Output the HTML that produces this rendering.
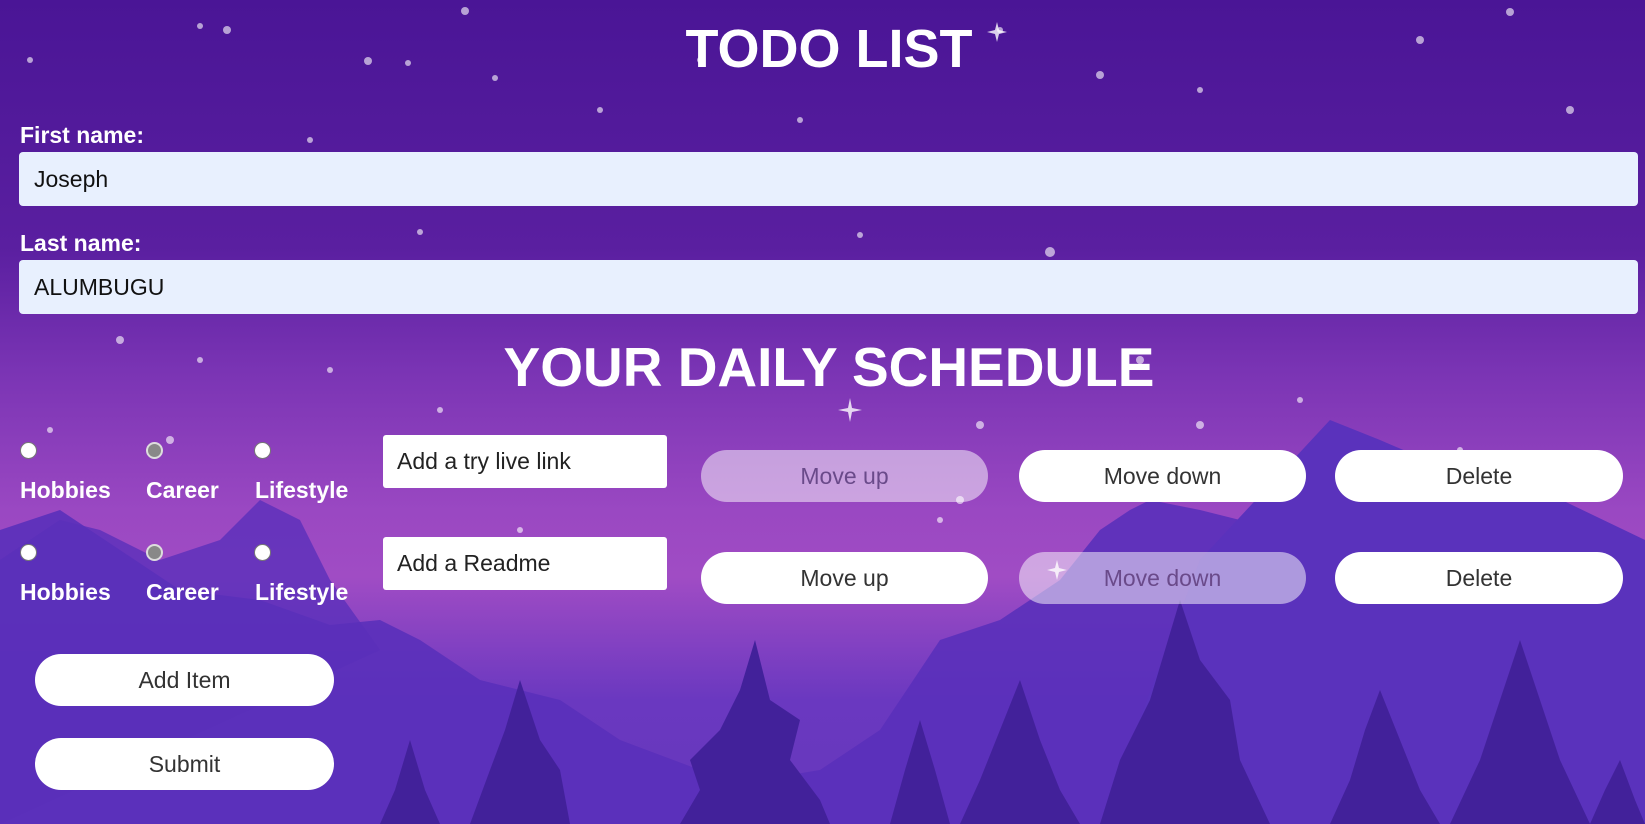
<!DOCTYPE html>
<html><head><meta charset="utf-8"><style>
*{margin:0;padding:0;box-sizing:border-box}
html,body{width:1645px;height:824px;overflow:hidden}
body{position:relative;font-family:"Liberation Sans",Arial,sans-serif;background:linear-gradient(180deg,#4a1596 0%,#5a1fa0 30%,#7a34b4 45%,#9a48c2 62%,#a04cc4 70%,#6a38c0 85%,#6638bc 100%)}
.a{position:absolute}
h1{position:absolute;left:0;width:1645px;padding-left:13px;text-align:center;color:#fff;font-weight:bold;line-height:1}
.lbl{position:absolute;color:#fff;font-weight:bold;font-size:23px}
.inp{position:absolute;left:19px;width:1619px;height:54px;background:#e8f0fe;border-radius:4px;font-size:23px;padding-left:15px;line-height:54px;color:#111}
.r{position:absolute;width:17px;height:17px;border-radius:50%;background:#fff;border:1px solid #777}
.r.g{background:#888;border:2px solid #ddd}
.t{position:absolute;width:284px;height:53px;background:#fff;border-radius:3px;font-size:23px;line-height:53px;padding-left:14px;color:#222}
.b{position:absolute;height:52px;border-radius:26px;background:#fff;color:#333;font-size:23px;text-align:center;line-height:52px}
.b.d{background:rgba(255,255,255,.5);color:#6a4a8a}
</style></head><body>
<svg class="a" style="left:0;top:0" width="1645" height="824">
<path d="M0 530 L60 510 120 550 180 590 260 600 330 625 380 620 420 640 480 680 560 700 620 740 700 770 760 780 820 770 880 730 940 640 1000 620 1060 580 1100 530 1130 510 1150 500 1200 510 1260 525 1330 550 1410 500 1460 520 1500 550 1560 520 1645 540 L1645 824 L0 824Z" fill="#5a30ba" opacity=".9"/>
<path d="M0 560 L60 520 100 530 160 560 220 540 260 500 300 520 330 580 380 650 0 824Z" fill="#5a30ba" opacity=".8"/>
<path d="M1330 420 L1380 440 1450 470 1520 480 1645 540 L1645 824 1100 824 1200 560Z" fill="#5a32bc"/>
<g fill="#42219a">
<path d="M755 640 L770 700 800 720 790 760 820 800 830 824 680 824 700 790 690 760 720 730 740 690Z"/>
<path d="M520 680 L540 740 560 770 570 824 470 824 490 770 505 730Z"/>
<path d="M1180 600 L1200 660 1230 700 1240 760 1270 824 1100 824 1120 760 1150 700 1165 650Z"/>
<path d="M1020 680 L1040 740 1060 790 1080 824 960 824 980 780 1000 730Z"/>
<path d="M1520 640 L1540 700 1560 760 1590 824 1450 824 1480 760 1500 700Z"/>
<path d="M1380 690 L1400 740 1420 790 1440 824 1330 824 1350 780 1365 730Z"/>
<path d="M920 720 L935 770 950 824 890 824 905 770Z"/>
<path d="M410 740 L425 790 440 824 380 824 395 790Z"/>
<path d="M1620 760 L1635 800 1645 824 1590 824 1605 790Z"/>
</g>
<g fill="#fff" opacity=".6">
<circle cx="200" cy="26" r="3"/><circle cx="227" cy="30" r="4"/><circle cx="368" cy="61" r="4"/><circle cx="408" cy="63" r="3"/><circle cx="465" cy="11" r="4"/><circle cx="495" cy="78" r="3"/><circle cx="1420" cy="40" r="4"/><circle cx="1510" cy="12" r="4"/><circle cx="1570" cy="110" r="4"/><circle cx="1200" cy="90" r="3"/><circle cx="1100" cy="75" r="4"/><circle cx="800" cy="120" r="3"/><circle cx="600" cy="110" r="3"/><circle cx="860" cy="235" r="3"/><circle cx="1050" cy="252" r="5"/><circle cx="420" cy="232" r="3"/><circle cx="120" cy="340" r="4"/><circle cx="200" cy="360" r="3"/><circle cx="330" cy="370" r="3"/><circle cx="1140" cy="360" r="4"/><circle cx="1300" cy="400" r="3"/><circle cx="980" cy="425" r="4"/><circle cx="1200" cy="425" r="4"/><circle cx="50" cy="430" r="3"/><circle cx="170" cy="440" r="4"/><circle cx="440" cy="410" r="3"/><circle cx="520" cy="530" r="3"/><circle cx="940" cy="520" r="3"/><circle cx="960" cy="500" r="4"/><circle cx="1460" cy="450" r="3"/><circle cx="1620" cy="290" r="3"/><circle cx="700" cy="60" r="3"/><circle cx="1000" cy="30" r="3"/><circle cx="1260" cy="200" r="3"/><circle cx="30" cy="60" r="3"/><circle cx="310" cy="140" r="3"/>
</g>
<g fill="#fff" opacity=".8"><path d="M997 22l2 8 8 2-8 2-2 8-2-8-8-2 8-2z"/><path d="M850 398l2 10 10 2-10 2-2 10-2-10-10-2 10-2z"/><path d="M1057 560l2 8 8 2-8 2-2 8-2-8-8-2 8-2z"/></g>
</svg>
<h1 style="top:22px;font-size:54px">TODO LIST</h1>
<div class="lbl" style="left:20px;top:122px">First name:</div>
<div class="inp" style="top:152px">Joseph</div>
<div class="lbl" style="left:20px;top:230px">Last name:</div>
<div class="inp" style="top:260px">ALUMBUGU</div>
<h1 style="top:340px;font-size:55px">YOUR DAILY SCHEDULE</h1>
<div class="r" style="left:20px;top:442px"></div><div class="r g" style="left:146px;top:442px"></div><div class="r" style="left:254px;top:442px"></div>
<div class="lbl" style="left:20px;top:477px">Hobbies</div><div class="lbl" style="left:146px;top:477px">Career</div><div class="lbl" style="left:255px;top:477px">Lifestyle</div>
<div class="r" style="left:20px;top:544px"></div><div class="r g" style="left:146px;top:544px"></div><div class="r" style="left:254px;top:544px"></div>
<div class="lbl" style="left:20px;top:579px">Hobbies</div><div class="lbl" style="left:146px;top:579px">Career</div><div class="lbl" style="left:255px;top:579px">Lifestyle</div>
<div class="t" style="left:383px;top:435px">Add a try live link</div>
<div class="t" style="left:383px;top:537px">Add a Readme</div>
<div class="b d" style="left:701px;top:450px;width:287px">Move up</div>
<div class="b" style="left:1019px;top:450px;width:287px">Move down</div>
<div class="b" style="left:1335px;top:450px;width:288px">Delete</div>
<div class="b" style="left:701px;top:552px;width:287px">Move up</div>
<div class="b d" style="left:1019px;top:552px;width:287px">Move down</div>
<div class="b" style="left:1335px;top:552px;width:288px">Delete</div>
<div class="b" style="left:35px;top:654px;width:299px">Add Item</div>
<div class="b" style="left:35px;top:738px;width:299px">Submit</div>
</body></html>
